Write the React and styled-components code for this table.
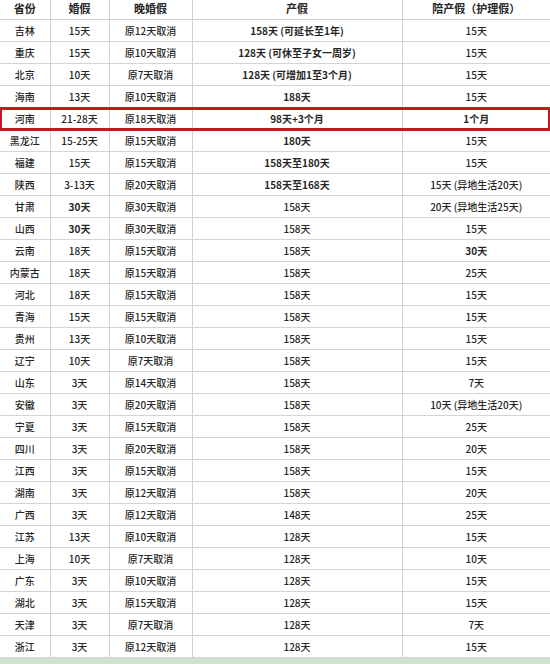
import React from 'react'
import styled, { createGlobalStyle } from 'styled-components'

const GlobalStyle = createGlobalStyle`
  html, body {
    margin: 0;
    padding: 0;
    background: #fff;
  }
  body {
    font-family: "Noto Sans CJK SC", "DejaVu Sans", sans-serif;
    color: #262626;
  }
`

const Page = styled.div`
  width: 550px;
  height: 664px;
  overflow: hidden;
  background: #fff;
  display: flex;
  flex-direction: column;
`

const Table = styled.table`
  width: 550px;
  border-collapse: collapse;
  table-layout: fixed;
`

const HeadCell = styled.th`
  height: 17px;
  padding: 2px 0 0;
  font-size: 11px;
  font-weight: 700;
  line-height: 13px;
  text-align: center;
  vertical-align: top;
  border-right: 1px solid #d0d0d0;
  border-bottom: 1px solid #cfcfcf;
  &:last-child {
    border-right: none;
  }
`

const Cell = styled.td`
  height: 21px;
  padding: 0;
  font-size: 10px;
  line-height: 12px;
  font-weight: ${p => (p.$bold ? 700 : 500)};
  text-align: center;
  vertical-align: middle;
  white-space: nowrap;
  border-right: 1px solid #d0d0d0;
  border-bottom: 1px solid #d4d4d4;
  &:last-child {
    border-right: none;
  }
`

const Row = styled.tr`
  outline: ${p => (p.$marked ? '3px solid #c8161d' : 'none')};
  outline-offset: -2px;
`

const Footer = styled.div`
  flex: 1;
  background: #cfe2cd;
`

const rows = [
  ['吉林', '15天', '原12天取消', '158天 (可延长至1年)', '15天', 'B'],
  ['重庆', '15天', '原10天取消', '128天 (可休至子女一周岁)', '15天', 'B'],
  ['北京', '10天', '原7天取消', '128天 (可增加1至3个月)', '15天', 'B'],
  ['海南', '13天', '原10天取消', '188天', '15天', 'B'],
  ['河南', '21-28天', '原18天取消', '98天+3个月', '1个月', 'BM'],
  ['黑龙江', '15-25天', '原15天取消', '180天', '15天', 'B'],
  ['福建', '15天', '原15天取消', '158天至180天', '15天', 'B'],
  ['陕西', '3-13天', '原20天取消', '158天至168天', '15天 (异地生活20天)', 'B'],
  ['甘肃', '30天', '原30天取消', '158天', '20天 (异地生活25天)', 'W'],
  ['山西', '30天', '原30天取消', '158天', '15天', 'W'],
  ['云南', '18天', '原15天取消', '158天', '30天', 'P'],
  ['内蒙古', '18天', '原15天取消', '158天', '25天', ''],
  ['河北', '18天', '原15天取消', '158天', '15天', ''],
  ['青海', '15天', '原15天取消', '158天', '15天', ''],
  ['贵州', '13天', '原10天取消', '158天', '15天', ''],
  ['辽宁', '10天', '原7天取消', '158天', '15天', ''],
  ['山东', '3天', '原14天取消', '158天', '7天', ''],
  ['安徽', '3天', '原20天取消', '158天', '10天 (异地生活20天)', ''],
  ['宁夏', '3天', '原15天取消', '158天', '25天', ''],
  ['四川', '3天', '原20天取消', '158天', '20天', ''],
  ['江西', '3天', '原15天取消', '158天', '15天', ''],
  ['湖南', '3天', '原12天取消', '158天', '20天', ''],
  ['广西', '3天', '原12天取消', '148天', '25天', ''],
  ['江苏', '13天', '原10天取消', '128天', '15天', ''],
  ['上海', '10天', '原7天取消', '128天', '10天', ''],
  ['广东', '3天', '原10天取消', '128天', '15天', ''],
  ['湖北', '3天', '原15天取消', '128天', '15天', ''],
  ['天津', '3天', '原7天取消', '128天', '7天', ''],
  ['浙江', '3天', '原12天取消', '128天', '15天', ''],
]

const App = () => {
  return (
    <Page>
      <GlobalStyle />
      <Table>
        <colgroup>
          <col style={{ width: 50 }} />
          <col style={{ width: 59 }} />
          <col style={{ width: 83 }} />
          <col style={{ width: 210 }} />
          <col style={{ width: 148 }} />
        </colgroup>
        <thead>
          <tr>
            <HeadCell>省份</HeadCell>
            <HeadCell>婚假</HeadCell>
            <HeadCell>晚婚假</HeadCell>
            <HeadCell>产假</HeadCell>
            <HeadCell>陪产假（护理假）</HeadCell>
          </tr>
        </thead>
        <tbody>
          {rows.map(([prov, marry, late, birth, partner, flags]) => (
            <Row key={prov} $marked={flags.includes('M')}>
              <Cell>{prov}</Cell>
              <Cell $bold={flags.includes('W')}>{marry}</Cell>
              <Cell>{late}</Cell>
              <Cell $bold={flags.includes('B')}>{birth}</Cell>
              <Cell $bold={flags.includes('M') || flags.includes('P')}>{partner}</Cell>
            </Row>
          ))}
        </tbody>
      </Table>
      <Footer />
    </Page>
  )
}

export default App
